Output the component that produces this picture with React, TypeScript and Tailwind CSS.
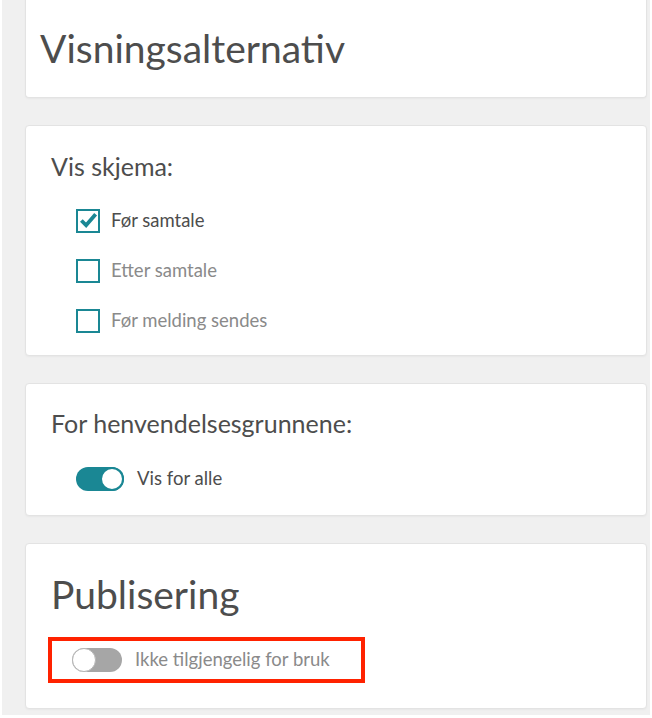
import { useState } from "react";

const font = { fontFamily: '"Lato", "Open Sans", sans-serif' };

function Card({ children, className = "" }: { children: React.ReactNode; className?: string }) {
  return (
    <section
      className={`rounded-[4px] border border-[#e3e3e3] bg-white shadow-[0_1px_2px_rgba(0,0,0,0.04)] ${className}`}
    >
      {children}
    </section>
  );
}

function Checkbox({ label, checked }: { label: string; checked: boolean }) {
  return (
    <label className="flex h-[25px] items-center gap-[11px]">
      <span className="flex h-[24px] w-[24px] items-center justify-center border-[2.5px] border-[#1a8794] bg-white">
        {checked && (
          <svg viewBox="0 0 20 20" className="h-[19px] w-[19px]">
            <path d="M2.5 10 L7.5 15 L17.5 3.5" fill="none" stroke="#1a8794" strokeWidth="4" strokeLinecap="butt" />
          </svg>
        )}
      </span>
      <span className={`text-[18.5px] ${checked ? "text-[#4d4d4d]" : "text-[#8a8a8a]"}`}>{label}</span>
    </label>
  );
}

function Toggle({ on, label }: { on: boolean; label: string }) {
  return (
    <div className="flex items-center gap-[13px]">
      {on ? (
        <span className="relative flex h-[24px] w-[48px] items-center rounded-full bg-[#1a8794]">
          <span className="absolute right-0 h-[24px] w-[24px] rounded-full border-2 border-[#1a8794] bg-white" />
        </span>
      ) : (
        <span className="relative flex h-[24px] w-[50px] items-center rounded-full bg-[#a6a6a6]">
          <span className="absolute left-0 h-[24px] w-[24px] rounded-full border border-[#b5b5b5] bg-white" />
        </span>
      )}
      <span className={`text-[18.5px] ${on ? "text-[#4d4d4d]" : "text-[#8a8a8a]"}`}>{label}</span>
    </div>
  );
}

export default function App() {
  const [options] = useState([
    { label: "Før samtale", checked: true },
    { label: "Etter samtale", checked: false },
    { label: "Før melding sendes", checked: false },
  ]);

  return (
    <div className="h-[718px] w-[652px] overflow-hidden bg-white" style={font}>
      <div className="ml-[2px] flex h-[715px] w-[648px] flex-col gap-[27px] bg-[#f0f0f0] pl-[23px] pr-[3px]">
        <Card className="-mt-[2px] flex h-[100px] items-center rounded-t-none border-t-0 px-[14px] pt-[2px]">
          <h1 className="text-[39px] leading-none text-[#4d4d4d]">Visningsalternativ</h1>
        </Card>

        <Card className="h-[231px] px-[25px] pt-[23px]">
          <h2 className="text-[25px] leading-[34px] text-[#4d4d4d]">Vis skjema:</h2>
          <div className="mt-[25px] flex flex-col gap-[25px] pl-[25px]">
            {options.map((o) => (
              <Checkbox key={o.label} label={o.label} checked={o.checked} />
            ))}
          </div>
        </Card>

        <Card className="h-[133px] px-[25px] pt-[22px]">
          <h2 className="text-[25px] leading-[34px] text-[#4d4d4d]">For henvendelsesgrunnene:</h2>
          <div className="mt-[25px] pl-[25px]">
            <Toggle on label="Vis for alle" />
          </div>
        </Card>

        <Card className="h-[166px] px-[22px] pt-[28px]">
          <h2 className="pl-[3px] text-[39px] leading-[44px] text-[#4d4d4d]">Publisering</h2>
          <div className="mt-[21px] inline-flex h-[46px] w-[317px] items-center border-[4px] border-[#ff2200] pl-[20px]">
            <Toggle on={false} label="Ikke tilgjengelig for bruk" />
          </div>
        </Card>
      </div>
    </div>
  );
}
